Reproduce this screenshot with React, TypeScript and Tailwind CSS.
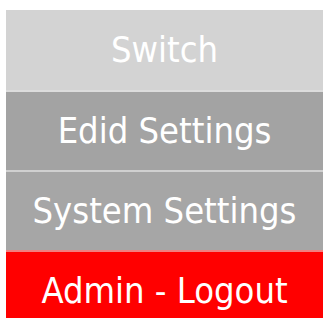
const items = [
  { label: 'Switch', cls: 'bg-[#d3d3d3]' },
  { label: 'Edid Settings', cls: 'bg-[#a3a3a3] border-t-2 border-[#dcdcdc]' },
  { label: 'System Settings', cls: 'bg-[#a6a6a6] border-t-2 border-[#d0d0d0]' },
  { label: 'Admin - Logout', cls: 'bg-[#ff0000] border-t-2 border-[#f08080]' },
];

export default function App() {
  return (
    <div className="h-[318px] w-[326px] overflow-hidden bg-white pl-[6px] pr-[3px] pt-[10px]">
      <div className="flex flex-col">
        {items.map((it) => (
          <button
            key={it.label}
            className={`flex h-[80px] w-full items-center justify-center text-[36px] text-white ${it.cls}`}
            style={{ fontFamily: '"DejaVu Sans Condensed", "DejaVu Sans", sans-serif' }}
          >
            {it.label}
          </button>
        ))}
      </div>
    </div>
  );
}
